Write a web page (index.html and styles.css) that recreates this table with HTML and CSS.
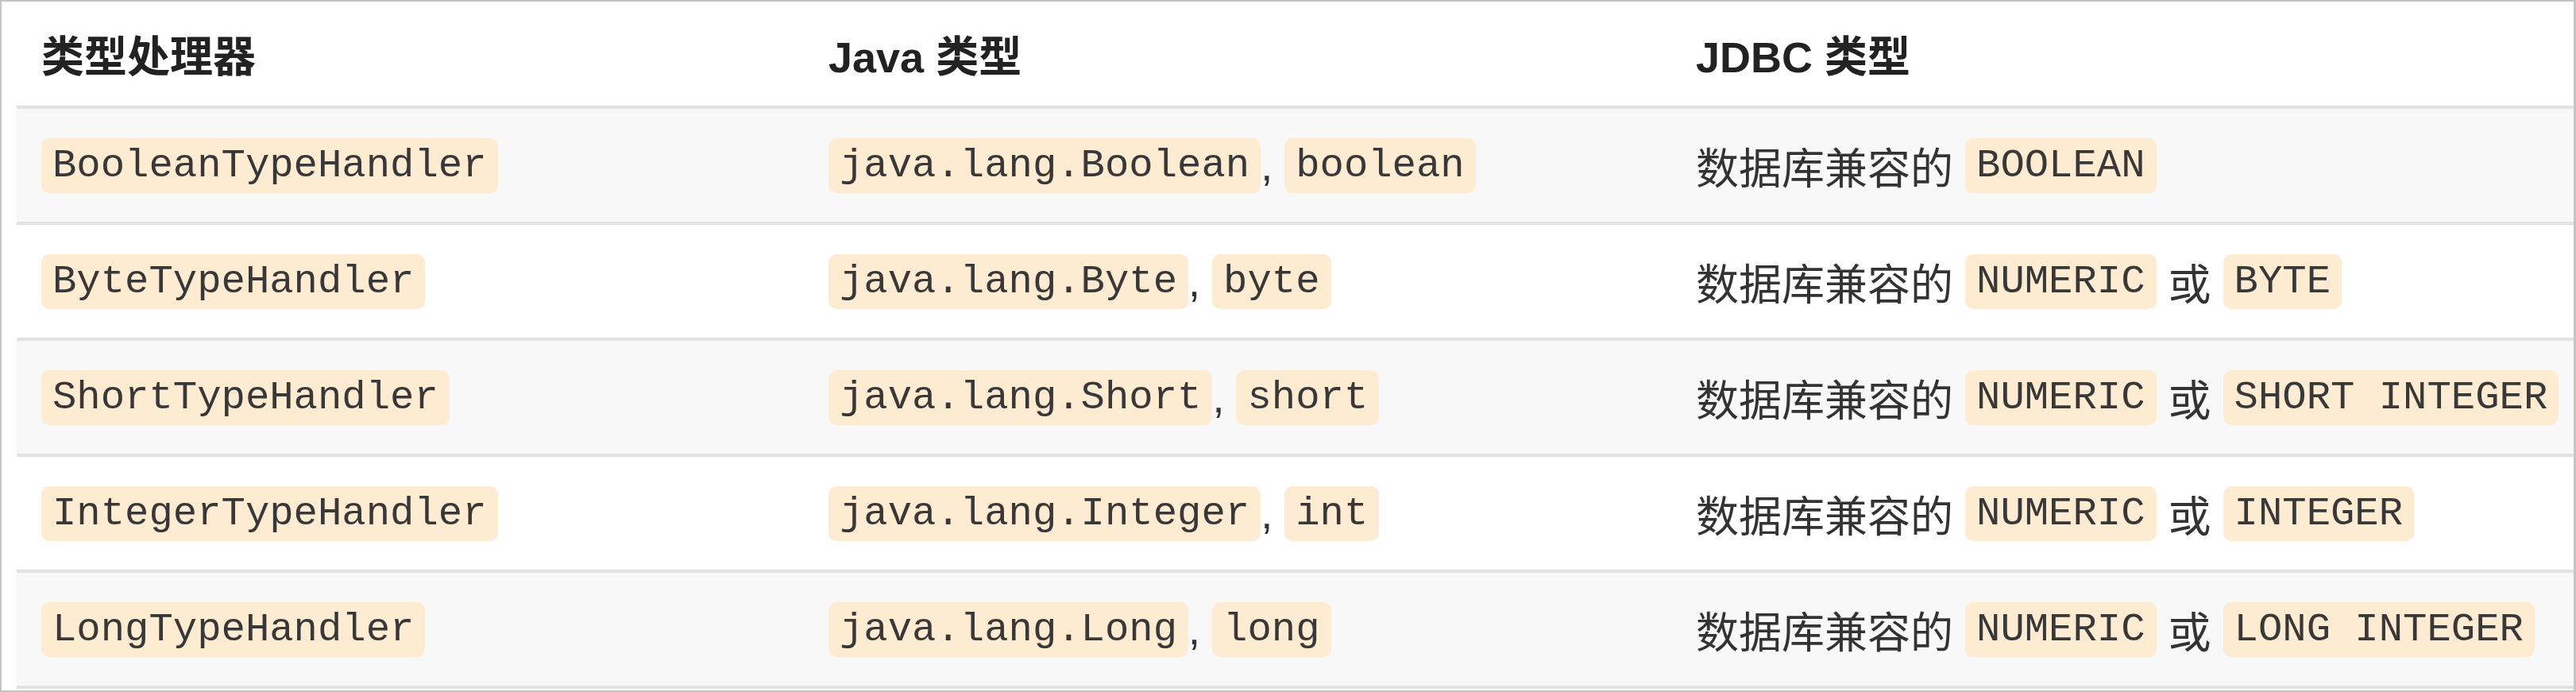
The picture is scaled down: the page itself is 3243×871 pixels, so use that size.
FILE: index.html
```html
<!DOCTYPE html>
<html lang="zh-CN">
<head>
<meta charset="utf-8">
<title>类型处理器</title>
<link rel="stylesheet" href="styles.css">
</head>
<body>
<div class="frame">
  <div class="table">
    <div class="row head">
      <div class="cell">类型处理器</div>
      <div class="cell">Java 类型</div>
      <div class="cell">JDBC 类型</div>
    </div>
    <div class="row odd">
      <div class="cell"><span class="code">BooleanTypeHandler</span></div>
      <div class="cell"><span class="code">java.lang.Boolean</span>, <span class="code">boolean</span></div>
      <div class="cell">数据库兼容的 <span class="code">BOOLEAN</span></div>
    </div>
    <div class="row">
      <div class="cell"><span class="code">ByteTypeHandler</span></div>
      <div class="cell"><span class="code">java.lang.Byte</span>, <span class="code">byte</span></div>
      <div class="cell">数据库兼容的 <span class="code">NUMERIC</span> 或 <span class="code">BYTE</span></div>
    </div>
    <div class="row odd">
      <div class="cell"><span class="code">ShortTypeHandler</span></div>
      <div class="cell"><span class="code">java.lang.Short</span>, <span class="code">short</span></div>
      <div class="cell">数据库兼容的 <span class="code">NUMERIC</span> 或 <span class="code">SHORT INTEGER</span></div>
    </div>
    <div class="row">
      <div class="cell"><span class="code">IntegerTypeHandler</span></div>
      <div class="cell"><span class="code">java.lang.Integer</span>, <span class="code">int</span></div>
      <div class="cell">数据库兼容的 <span class="code">NUMERIC</span> 或 <span class="code">INTEGER</span></div>
    </div>
    <div class="row odd">
      <div class="cell"><span class="code">LongTypeHandler</span></div>
      <div class="cell"><span class="code">java.lang.Long</span>, <span class="code">long</span></div>
      <div class="cell">数据库兼容的 <span class="code">NUMERIC</span> 或 <span class="code">LONG INTEGER</span></div>
    </div>
  </div>
</div>
</body>
</html>
```

FILE: styles.css
```css
html, body {
  margin: 0;
  padding: 0;
  background: #ffffff;
}

.frame {
  box-sizing: border-box;
  width: 3243px;
  height: 871px;
  border: 2px solid #c4c4c4;
  border-right-width: 3px;
  overflow: hidden;
  background: #ffffff;
}

.table {
  margin-left: 19px;
  font-family: "Liberation Sans", "Noto Sans CJK SC", sans-serif;
  font-size: 54px;
  color: #333333;
}

.row {
  display: grid;
  grid-template-columns: 991px 1092px 1fr;
  height: 142px;
  border-bottom: 4px solid #e2e2e2;
  background: #ffffff;
}

.row.odd {
  background: #f8f8f8;
}

.row.head {
  height: 131px;
  font-weight: bold;
  color: #222222;
}

.cell {
  display: flex;
  align-items: center;
  padding-left: 31px;
  white-space: pre;
}

.code {
  display: inline-block;
  font-family: "Liberation Mono", monospace;
  font-size: 50.6px;
  line-height: 69px;
  padding: 0 14px;
  border-radius: 10px;
  background: #fdebd2;
  color: #383838;
}
```
